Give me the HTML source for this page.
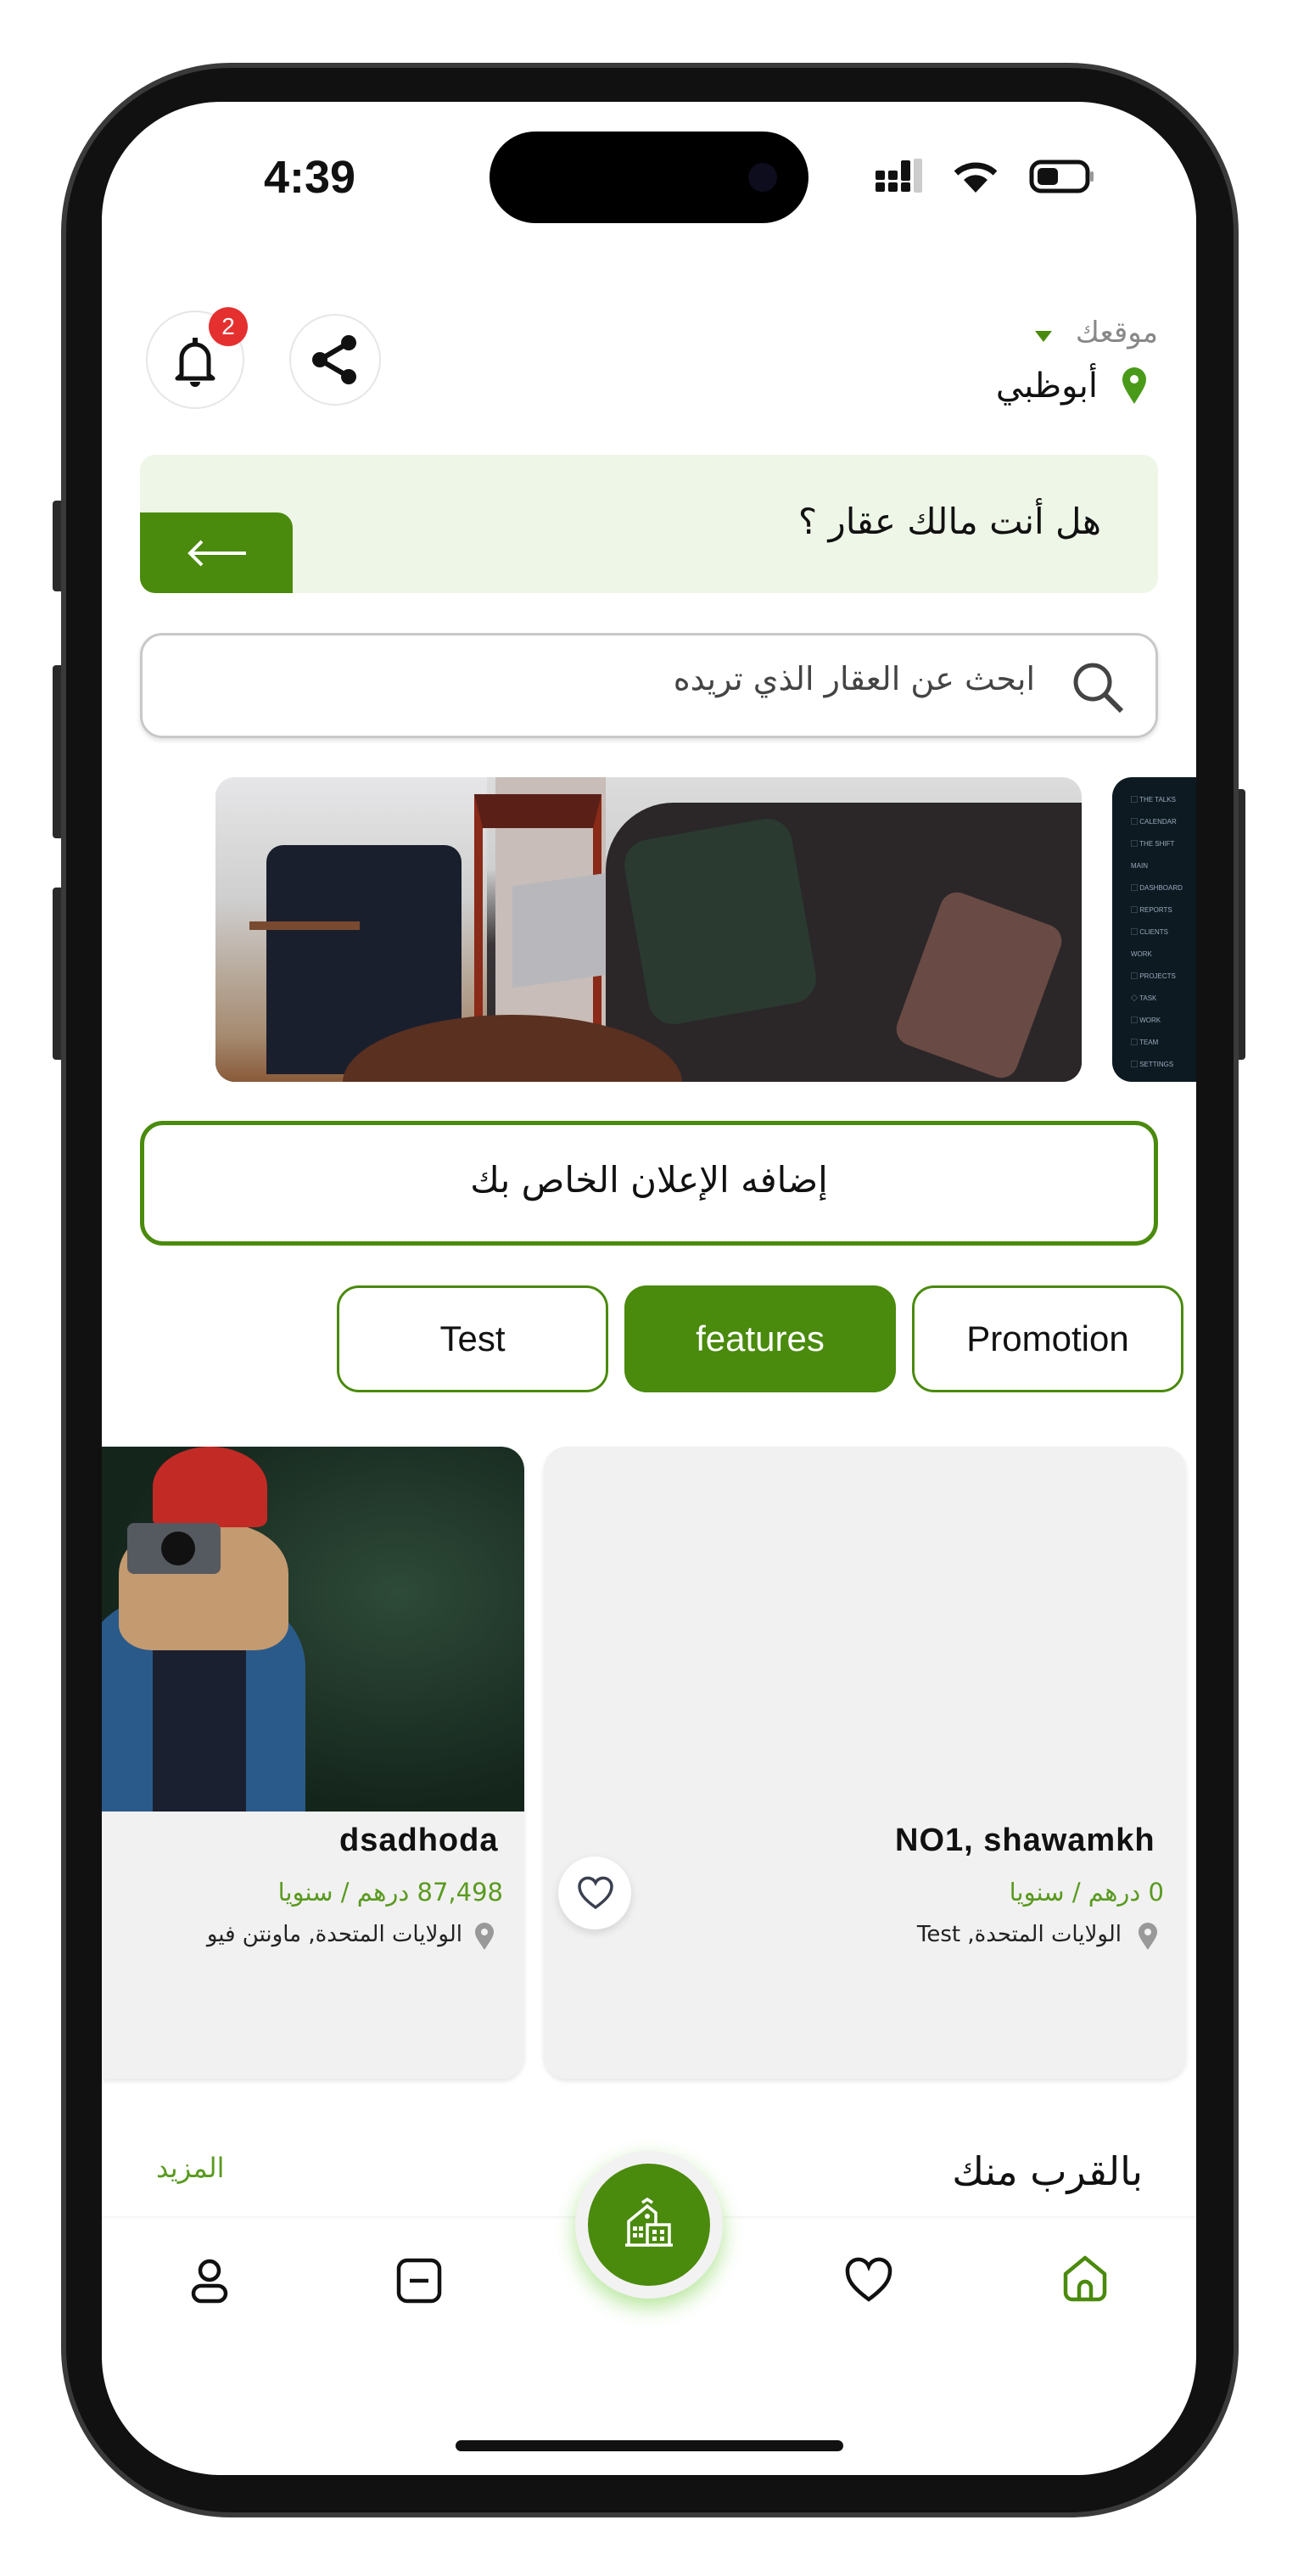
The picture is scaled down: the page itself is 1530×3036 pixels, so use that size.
<!DOCTYPE html>
<html><head><meta charset="utf-8">
<style>
*{margin:0;padding:0;box-sizing:border-box}
html,body{width:1530px;height:3036px;background:#fff;overflow:hidden;position:relative;font-family:"Liberation Sans","Noto Sans CJK SC",sans-serif}
.a{position:absolute}
.ar{font-family:"DejaVu Sans","Liberation Sans",sans-serif;direction:rtl;white-space:nowrap}
</style></head><body>
<!-- side buttons -->
<div class="a" style="left:62px;top:590px;width:14px;height:107px;background:#2a2a2a;border-radius:4px"></div>
<div class="a" style="left:62px;top:784px;width:14px;height:204px;background:#2a2a2a;border-radius:4px"></div>
<div class="a" style="left:62px;top:1046px;width:14px;height:203px;background:#2a2a2a;border-radius:4px"></div>
<div class="a" style="left:1454px;top:930px;width:14px;height:319px;background:#2a2a2a;border-radius:4px"></div>
<!-- frame -->
<div class="a" style="left:72px;top:74px;width:1388px;height:2893px;background:#111;border-radius:200px;border:6px solid #3a3a3a"></div>
<div class="a" style="left:120px;top:120px;width:1290px;height:2797px;background:#fff;border-radius:140px;overflow:hidden">
</div>
<!-- dynamic island -->
<div class="a" style="left:577px;top:155px;width:376px;height:108px;background:#000;border-radius:54px"></div>
<div class="a" style="left:882px;top:192px;width:34px;height:34px;background:#0d0d1e;border-radius:50%"></div>
<div class="a" style="left:300px;top:178px;width:130px;font-size:54px;font-weight:bold;color:#111;text-align:center">4:39</div>
<!-- status -->
<svg class="a" style="left:1030px;top:185px" width="260" height="50" viewBox="0 0 260 50">
<g fill="#111"><rect x="2" y="30" width="11" height="11" rx="2"/><rect x="2" y="16" width="11" height="11" rx="2"/><rect x="17" y="30" width="11" height="11" rx="2"/><rect x="17" y="16" width="11" height="11" rx="2"/><rect x="32" y="30" width="11" height="11" rx="2"/><rect x="32" y="4" width="11" height="24" rx="2"/></g>
<rect x="47" y="2" width="10" height="40" rx="2" fill="#ccc"/>
<path d="M120 42 L106 27 A20 20 0 0 1 134 27 Z" fill="#111"/>
<path d="M97 19 A34 34 0 0 1 143 19" stroke="#111" stroke-width="7" fill="none"/>
<rect x="186" y="6" width="66" height="34" rx="11" fill="none" stroke="#111" stroke-width="5"/>
<rect x="193" y="13" width="24" height="20" rx="5" fill="#111"/>
<rect x="255" y="17" width="4" height="12" rx="2" fill="#999"/>
</svg>
<!-- header -->
<div class="a" style="left:172px;top:366px;width:116px;height:116px;border:2px solid #e6e6e6;border-radius:50%"></div>
<svg class="a" style="left:200px;top:392px" width="60" height="70" viewBox="0 0 60 70"><path d="M14 50 V30 A16 16 0 0 1 46 30 V50 L51 54 H9 Z" fill="none" stroke="#111" stroke-width="5" stroke-linejoin="round"/><path d="M24 58 A6 6 0 0 0 36 58 Z" fill="#111"/><rect x="27" y="6" width="6" height="8" fill="#111"/></svg>
<div class="a" style="left:246px;top:362px;width:46px;height:46px;background:#e53030;border-radius:50%;color:#fff;font-size:28px;text-align:center;line-height:46px">2</div>
<div class="a" style="left:341px;top:370px;width:108px;height:108px;border:2px solid #e6e6e6;border-radius:50%"></div>
<svg class="a" style="left:365px;top:394px" width="60" height="60" viewBox="0 0 60 60"><g fill="#111"><circle cx="46" cy="10" r="9"/><circle cx="12" cy="30" r="9"/><circle cx="46" cy="50" r="9"/></g><path d="M46 10 L12 30 L46 50" stroke="#111" stroke-width="6" fill="none"/></svg>
<div class="a ar" style="right:165px;top:372px;font-size:34px;color:#888">موقعك</div>
<svg class="a" style="left:1220px;top:390px" width="20" height="14"><path d="M0 0 H20 L10 13 Z" fill="#4a8a0c"/></svg>
<div class="a ar" style="right:236px;top:432px;font-size:40px;color:#111">أبوظبي</div>
<svg class="a" style="left:1322px;top:432px" width="30" height="44" viewBox="0 0 30 44"><path d="M15 44 C5 28 1 22 1 15 A14 14 0 0 1 29 15 C29 22 25 28 15 44Z" fill="#4a9a1a"/><circle cx="15" cy="15" r="5" fill="#fff"/></svg>
<!-- banner -->
<div class="a" style="left:165px;top:536px;width:1200px;height:163px;background:#eef6e7;border-radius:18px"></div>
<div class="a" style="left:165px;top:604px;width:180px;height:95px;background:#4a8a0c;border-radius:0 18px 0 18px"></div>
<svg class="a" style="left:218px;top:632px" width="76" height="40" viewBox="0 0 76 40"><path d="M72 20 H6 M20 6 L6 20 L20 34" stroke="#fff" stroke-width="4" fill="none"/></svg>
<div class="a ar" style="right:232px;top:590px;font-size:42px;color:#111">هل أنت مالك عقار ؟</div>
<!-- search -->
<div class="a" style="left:165px;top:746px;width:1200px;height:124px;border:3px solid #c8c8c8;border-radius:26px;box-shadow:0 3px 6px rgba(0,0,0,.12)"></div>
<svg class="a" style="left:1262px;top:778px" width="66" height="66" viewBox="0 0 66 66"><circle cx="26" cy="26" r="20" stroke="#444" stroke-width="5" fill="none"/><path d="M40 40 L60 60" stroke="#444" stroke-width="6"/></svg>
<div class="a ar" style="right:310px;top:778px;font-size:38px;color:#444">ابحث عن العقار الذي تريده</div>
<!-- carousel -->
<div class="a" style="left:254px;top:916px;width:1021px;height:359px;border-radius:23px;overflow:hidden;background:linear-gradient(180deg,#dcdcdc 0%,#cfcfcf 30%,#3a3538 55%,#2a2628 100%)">
<div class="a" style="left:0;top:0;width:320px;height:359px;background:linear-gradient(180deg,#e6e6e8 0,#cfcfcf 40%,#a58a70 85%,#8a5a3a 100%)"></div>
<div class="a" style="left:330px;top:0;width:130px;height:300px;background:#c8bdb8"></div>
<div class="a" style="left:60px;top:80px;width:230px;height:270px;background:#1a1f2e;border-radius:20px 20px 0 0"></div>
<div class="a" style="left:40px;top:170px;width:130px;height:10px;background:#7a4a30"></div>
<div class="a" style="left:305px;top:20px;width:150px;height:280px;border:10px solid #8a2a18;border-top:40px solid #5a2018"></div>
<div class="a" style="left:350px;top:120px;width:120px;height:120px;background:#b8b8bc;transform:skewY(-8deg)"></div>
<div class="a" style="left:460px;top:30px;width:561px;height:329px;background:#2b2729;border-radius:80px 0 0 0"></div>
<div class="a" style="left:495px;top:60px;width:200px;height:220px;background:#2a3a30;border-radius:30px;transform:rotate(-10deg)"></div>
<div class="a" style="left:825px;top:150px;width:150px;height:190px;background:#6a4a44;border-radius:20px;transform:rotate(20deg)"></div>
<div class="a" style="left:150px;top:280px;width:400px;height:160px;background:#5a3020;border-radius:50%"></div>
</div>
<div class="a" style="left:1311px;top:916px;width:99px;height:359px;background:#0d1a22;border-radius:23px 0 0 23px;overflow:hidden">
<div style="padding:14px 0 0 22px;font-size:8px;color:#9ab;line-height:26px;white-space:nowrap">▢ THE TALKS<br>▢ CALENDAR<br>▢ THE SHIFT<br>MAIN<br>▢ DASHBOARD<br>▢ REPORTS<br>▢ CLIENTS<br>WORK<br>▢ PROJECTS<br>◇ TASK<br>▢ WORK<br>▢ TEAM<br>▢ SETTINGS</div></div>
<!-- add ad -->
<div class="a" style="left:165px;top:1321px;width:1200px;height:147px;border:5px solid #4a8a0c;border-radius:27px"></div>
<div class="a ar" style="left:165px;width:1200px;top:1366px;font-size:42px;color:#111;text-align:center">إضافه الإعلان الخاص بك</div>
<!-- tabs -->
<div class="a" style="left:397px;top:1515px;width:320px;height:126px;border:3px solid #4a8a0c;border-radius:26px;font-size:42px;color:#111;text-align:center;line-height:120px">Test</div>
<div class="a" style="left:736px;top:1515px;width:320px;height:126px;background:#4a8a0c;border-radius:26px;font-size:42px;color:#fff;text-align:center;line-height:126px">features</div>
<div class="a" style="left:1075px;top:1515px;width:320px;height:126px;border:3px solid #4a8a0c;border-radius:26px;font-size:42px;color:#111;text-align:center;line-height:120px">Promotion</div>
<!-- cards -->
<div class="a" style="left:120px;top:1705px;width:498px;height:745px;background:#f1f1f1;border-radius:0 27px 27px 0;box-shadow:0 3px 6px rgba(0,0,0,.1);overflow:hidden">
<div class="a" style="left:0;top:0;width:498px;height:430px;overflow:hidden;border-radius:0 27px 0 0;background:radial-gradient(ellipse at 70% 40%,#2e4a38,#14251c 70%)">
<div class="a" style="left:-20px;top:180px;width:260px;height:260px;background:#2a5a8a;border-radius:80px 80px 0 0"></div>
<div class="a" style="left:60px;top:230px;width:110px;height:200px;background:#1a2030"></div>
<div class="a" style="left:20px;top:90px;width:200px;height:150px;background:#c49a70;border-radius:40% 40% 20% 20%"></div>
<div class="a" style="left:60px;top:0;width:135px;height:95px;background:#c22a25;border-radius:50% 50% 10% 10%"></div>
<div class="a" style="left:30px;top:90px;width:110px;height:60px;background:#555a60;border-radius:8px"></div>
<div class="a" style="left:70px;top:100px;width:40px;height:40px;background:#111;border-radius:50%"></div>
</div></div>
<div class="a" style="left:400px;top:2148px;font-size:38px;font-weight:bold;color:#111;letter-spacing:1px">dsadhoda</div>
<div class="a ar" style="right:937px;top:2213px;font-size:29px;color:#5a9a20">87,498 درهم / سنويا</div>
<div class="a ar" style="right:985px;top:2265px;font-size:26px;color:#222">الولايات المتحدة, ماونتن فيو</div>
<svg class="a" style="left:559px;top:2266px" width="24" height="32" viewBox="0 0 24 32"><path d="M12 32 C4 20 1 16 1 11 A11 11 0 0 1 23 11 C23 16 20 20 12 32Z" fill="#999"/><circle cx="12" cy="11" r="4" fill="#f1f1f1"/></svg>
<div class="a" style="left:641px;top:1705px;width:757px;height:745px;background:#f1f1f1;border-radius:27px;box-shadow:0 3px 6px rgba(0,0,0,.1)"></div>
<div class="a" style="left:1055px;top:2148px;font-size:38px;font-weight:bold;color:#111;letter-spacing:1px">NO1, shawamkh</div>
<div class="a ar" style="right:158px;top:2213px;font-size:29px;color:#5a9a20">0 درهم / سنويا</div>
<div class="a ar" style="right:208px;top:2265px;font-size:26px;color:#222">الولايات المتحدة, Test</div>
<svg class="a" style="left:1341px;top:2266px" width="24" height="32" viewBox="0 0 24 32"><path d="M12 32 C4 20 1 16 1 11 A11 11 0 0 1 23 11 C23 16 20 20 12 32Z" fill="#999"/><circle cx="12" cy="11" r="4" fill="#f1f1f1"/></svg>
<div class="a" style="left:658px;top:2188px;width:86px;height:86px;background:#fff;border-radius:50%;box-shadow:0 4px 10px rgba(0,0,0,.12)"></div>
<svg class="a" style="left:680px;top:2210px" width="44" height="42" viewBox="0 0 44 42"><path d="M22 38 C8 28 3 21 3 13 A10 10 0 0 1 22 9 A10 10 0 0 1 41 13 C41 21 36 28 22 38Z" fill="none" stroke="#3a4050" stroke-width="3.5"/></svg>
<!-- near you -->
<div class="a ar" style="right:183px;top:2532px;font-size:46px;color:#111">بالقرب منك</div>
<div class="a ar" style="left:184px;top:2536px;font-size:32px;color:#5a9a20;direction:rtl">المزيد</div>
<!-- nav -->
<div class="a" style="left:120px;top:2612px;width:1290px;height:4px;background:linear-gradient(#f4f4f4,#fff)"></div>
<svg class="a" style="left:222px;top:2660px" width="50" height="56" viewBox="0 0 50 56"><circle cx="25" cy="16" r="11" fill="none" stroke="#111" stroke-width="4.5"/><rect x="6" y="34" width="38" height="18" rx="9" fill="none" stroke="#111" stroke-width="4.5"/></svg>
<svg class="a" style="left:466px;top:2660px" width="56" height="56" viewBox="0 0 56 56"><rect x="4" y="4" width="48" height="48" rx="10" fill="none" stroke="#111" stroke-width="4.5"/><path d="M17 28 H39" stroke="#111" stroke-width="4.5"/></svg>
<svg class="a" style="left:995px;top:2660px" width="58" height="54" viewBox="0 0 58 54"><path d="M29 50 C10 36 4 27 4 17 A13 13 0 0 1 29 11 A13 13 0 0 1 54 17 C54 27 48 36 29 50Z" fill="none" stroke="#111" stroke-width="4.5"/></svg>
<svg class="a" style="left:1250px;top:2656px" width="58" height="60" viewBox="0 0 58 60"><path d="M6 24 L29 5 L52 24 V46 A8 8 0 0 1 44 54 H14 A8 8 0 0 1 6 46 Z" fill="none" stroke="#4a8a0c" stroke-width="4.5" stroke-linejoin="round"/><path d="M22 54 V40 A7 7 0 0 1 36 40 V54" fill="none" stroke="#4a8a0c" stroke-width="4.5"/></svg>
<div class="a" style="left:678px;top:2535px;width:174px;height:174px;border-radius:50%;background:#f2f2f2;box-shadow:0 10px 24px rgba(90,200,30,.45)"></div>
<div class="a" style="left:693px;top:2550px;width:144px;height:144px;border-radius:50%;background:#4a8a0c"></div>
<svg class="a" style="left:733px;top:2588px" width="64" height="64" viewBox="0 0 64 64"><g fill="none" stroke="#fff" stroke-width="3.5"><path d="M4 58 H60"/><path d="M8 58 V30 L30 12 L40 20 V34"/><path d="M30 58 V34 H56 V58"/><path d="M24 8 L30 4 L36 8"/></g><g fill="#fff"><rect x="13" y="36" width="5" height="5"/><rect x="20" y="36" width="5" height="5"/><rect x="13" y="44" width="5" height="5"/><rect x="20" y="44" width="5" height="5"/><rect x="36" y="40" width="5" height="5"/><rect x="45" y="40" width="5" height="5"/><rect x="36" y="48" width="5" height="5"/><rect x="45" y="48" width="5" height="5"/><circle cx="30" cy="24" r="3"/></g></svg>
<!-- home indicator -->
<div class="a" style="left:537px;top:2876px;width:457px;height:13px;background:#111;border-radius:7px"></div>
</body></html>
